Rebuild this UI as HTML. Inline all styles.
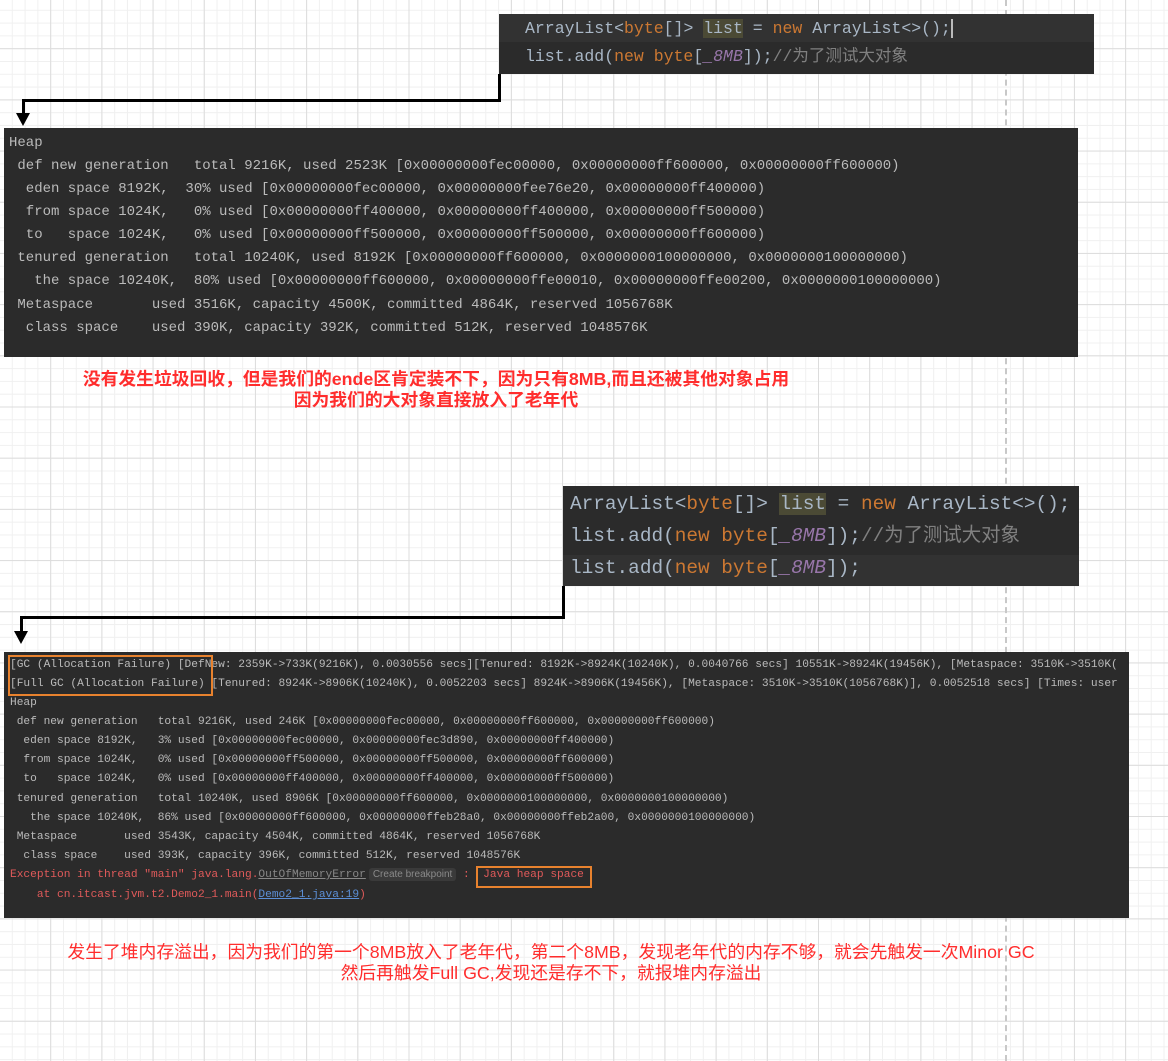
<!DOCTYPE html>
<html><head><meta charset="utf-8"><style>
body{margin:0;width:1168px;height:1061px;overflow:hidden;position:relative;
background-color:#fff;
background-image:linear-gradient(#dcdcdc 1px,transparent 1px),linear-gradient(90deg,#dcdcdc 1px,transparent 1px),linear-gradient(#f0f0f0 1px,transparent 1px),linear-gradient(90deg,#f0f0f0 1px,transparent 1px);
background-size:51.2px 51.2px,51.2px 51.2px,12.8px 12.8px,12.8px 12.8px;
background-position:-2px -3px,-1px -3px,-2px -3px,-1px -3px;}
.box{position:absolute;background:#2b2b2b;overflow:hidden}
.l{position:absolute;white-space:pre;font-family:"Liberation Mono","Noto Sans CJK SC",monospace;color:#bbbbbb;line-height:1.2}
.k{color:#cc7832}.p{color:#9876aa;font-style:italic}.c{color:#808080}.h{background:#4b4a35}
.r{color:#e05a5a}.u{color:#5c8fd6;text-decoration:underline}
.red{position:absolute;color:#ff2d2d;font-family:"Liberation Sans","Noto Sans CJK SC",sans-serif;text-align:center;white-space:pre}
.ln{position:absolute;background:#000}
</style></head><body>
<div style="position:absolute;left:1005px;top:0;height:1061px;border-left:2px dashed #c8c8c8"></div>

<div class="box" style="left:499px;top:14px;width:595px;height:60px;background:#2b2b2b">
<div style="position:absolute;left:0;top:0;width:595px;height:28px;background:#323232"></div>
<div class="l" style="left:26px;top:5px;font-size:16.5px;height:20px;color:#a9b7c6">ArrayList&lt;<span class="k">byte</span>[]&gt; <span class="h">list</span> = <span class="k">new</span> ArrayList&lt;&gt;();<span style="border-left:2px solid #bbb"></span></div>
<div class="l" style="left:26px;top:33px;font-size:16.5px;height:20px;color:#a9b7c6">list.add(<span class="k">new byte</span>[<span class="p">_8MB</span>]);<span class="c">//为了测试大对象</span></div>
</div>

<div class="ln" style="left:498px;top:74px;width:3px;height:28px"></div>
<div class="ln" style="left:22px;top:99px;width:479px;height:3px"></div>
<div class="ln" style="left:22px;top:99px;width:3px;height:16px"></div>
<div style="position:absolute;left:16px;top:113px;border-left:7px solid transparent;border-right:7px solid transparent;border-top:13px solid #000"></div>

<div class="box" style="left:4px;top:128px;width:1074px;height:229px">
<div class="l" style="left:5px;top:7px;font-size:14px">Heap</div>
<div class="l" style="left:5px;top:30px;font-size:14px"> def new generation   total 9216K, used 2523K [0x00000000fec00000, 0x00000000ff600000, 0x00000000ff600000)</div>
<div class="l" style="left:5px;top:53px;font-size:14px">  eden space 8192K,  30% used [0x00000000fec00000, 0x00000000fee76e20, 0x00000000ff400000)</div>
<div class="l" style="left:5px;top:76px;font-size:14px">  from space 1024K,   0% used [0x00000000ff400000, 0x00000000ff400000, 0x00000000ff500000)</div>
<div class="l" style="left:5px;top:99px;font-size:14px">  to   space 1024K,   0% used [0x00000000ff500000, 0x00000000ff500000, 0x00000000ff600000)</div>
<div class="l" style="left:5px;top:122px;font-size:14px"> tenured generation   total 10240K, used 8192K [0x00000000ff600000, 0x0000000100000000, 0x0000000100000000)</div>
<div class="l" style="left:5px;top:145px;font-size:14px">   the space 10240K,  80% used [0x00000000ff600000, 0x00000000ffe00010, 0x00000000ffe00200, 0x0000000100000000)</div>
<div class="l" style="left:5px;top:169px;font-size:14px"> Metaspace       used 3516K, capacity 4500K, committed 4864K, reserved 1056768K</div>
<div class="l" style="left:5px;top:192px;font-size:14px">  class space    used 390K, capacity 392K, committed 512K, reserved 1048576K</div>
</div>

<div class="red" style="left:0;width:872px;top:369px;font-size:17.8px;font-weight:bold;line-height:21px">没有发生垃圾回收，但是我们的ende区肯定装不下，因为只有8MB,而且还被其他对象占用
因为我们的大对象直接放入了老年代</div>

<div class="box" style="left:563px;top:486px;width:516px;height:100px">
<div style="position:absolute;left:0;top:69px;width:516px;height:31px;background:#323232"></div>
<div class="l" style="left:7px;top:7px;font-size:19.4px;height:24px;color:#a9b7c6">ArrayList&lt;<span class="k">byte</span>[]&gt; <span class="h">list</span> = <span class="k">new</span> ArrayList&lt;&gt;();</div>
<div class="l" style="left:7px;top:39px;font-size:19.4px;height:24px;color:#a9b7c6">list.add(<span class="k">new byte</span>[<span class="p">_8MB</span>]);<span class="c">//为了测试大对象</span></div>
<div class="l" style="left:7px;top:71px;font-size:19.4px;height:24px;color:#a9b7c6">list.add(<span class="k">new byte</span>[<span class="p">_8MB</span>]);</div>
</div>

<div class="ln" style="left:562px;top:586px;width:3px;height:33px"></div>
<div class="ln" style="left:20px;top:616px;width:545px;height:3px"></div>
<div class="ln" style="left:20px;top:616px;width:3px;height:16px"></div>
<div style="position:absolute;left:14px;top:631px;border-left:7px solid transparent;border-right:7px solid transparent;border-top:13px solid #000"></div>

<div class="box" style="left:4px;top:652px;width:1125px;height:266px">
<div class="l" style="left:6px;top:7px;font-size:11.2px">[GC (Allocation Failure) [DefNew: 2359K-&gt;733K(9216K), 0.0030556 secs][Tenured: 8192K-&gt;8924K(10240K), 0.0040766 secs] 10551K-&gt;8924K(19456K), [Metaspace: 3510K-&gt;3510K(</div>
<div class="l" style="left:6px;top:26px;font-size:11.2px">[Full GC (Allocation Failure) [Tenured: 8924K-&gt;8906K(10240K), 0.0052203 secs] 8924K-&gt;8906K(19456K), [Metaspace: 3510K-&gt;3510K(1056768K)], 0.0052518 secs] [Times: user</div>
<div style="position:absolute;left:4px;top:3px;width:201px;height:37px;border:2px solid #e8822e"></div>
<div class="l" style="left:6px;top:45px;font-size:11.2px">Heap</div>
<div class="l" style="left:6px;top:64px;font-size:11.2px"> def new generation   total 9216K, used 246K [0x00000000fec00000, 0x00000000ff600000, 0x00000000ff600000)</div>
<div class="l" style="left:6px;top:83px;font-size:11.2px">  eden space 8192K,   3% used [0x00000000fec00000, 0x00000000fec3d890, 0x00000000ff400000)</div>
<div class="l" style="left:6px;top:102px;font-size:11.2px">  from space 1024K,   0% used [0x00000000ff500000, 0x00000000ff500000, 0x00000000ff600000)</div>
<div class="l" style="left:6px;top:121px;font-size:11.2px">  to   space 1024K,   0% used [0x00000000ff400000, 0x00000000ff400000, 0x00000000ff500000)</div>
<div class="l" style="left:6px;top:141px;font-size:11.2px"> tenured generation   total 10240K, used 8906K [0x00000000ff600000, 0x0000000100000000, 0x0000000100000000)</div>
<div class="l" style="left:6px;top:160px;font-size:11.2px">   the space 10240K,  86% used [0x00000000ff600000, 0x00000000ffeb28a0, 0x00000000ffeb2a00, 0x0000000100000000)</div>
<div class="l" style="left:6px;top:179px;font-size:11.2px"> Metaspace       used 3543K, capacity 4504K, committed 4864K, reserved 1056768K</div>
<div class="l" style="left:6px;top:198px;font-size:11.2px">  class space    used 393K, capacity 396K, committed 512K, reserved 1048576K</div>
<div class="l r" style="left:6px;top:217px;font-size:11.2px">Exception in thread "main" java.lang.<span style="color:#888;text-decoration:underline">OutOfMemoryError</span><span style="background:#3a3a3a;color:#8a8a8a;font-family:'Liberation Sans',sans-serif;font-size:10px;padding:1px 4px;border-radius:3px;margin-left:3px">Create breakpoint</span> :  Java heap space</div>
<div style="position:absolute;left:472px;top:214px;width:112px;height:18px;border:2px solid #e8822e"></div>
<div class="l r" style="left:6px;top:237px;font-size:11.2px">    at cn.itcast.jvm.t2.Demo2_1.main(<span class="u">Demo2_1.java:19</span>)</div>
</div>

<div class="red" style="left:0;width:1102px;top:942px;font-size:17.8px;line-height:21px">发生了堆内存溢出，因为我们的第一个8MB放入了老年代，第二个8MB，发现老年代的内存不够，就会先触发一次Minor GC
然后再触发Full GC,发现还是存不下，就报堆内存溢出</div>
</body></html>
